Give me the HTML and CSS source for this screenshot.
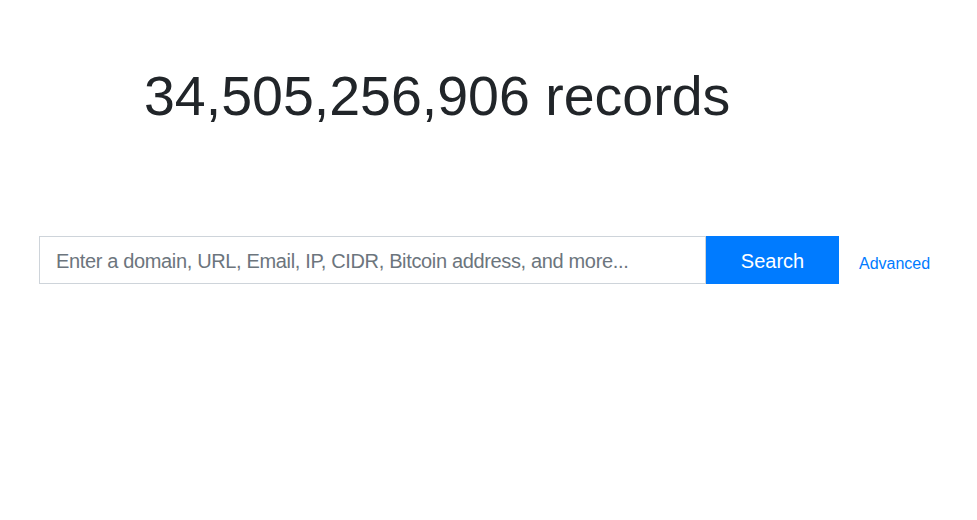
FILE: index.html
```html
<!DOCTYPE html>
<html lang="en">
<head>
    <meta charset="UTF-8">
    <meta name="viewport" content="width=device-width, initial-scale=1.0">
    <title>Search</title>
    <link rel="stylesheet" href="styles.css">
</head>
<body>
    <div class="container">
        <!-- Record count -->
        <h1 class="count">34,505,256,906 records</h1>

        <!-- Search bar -->
        <form class="search-row" onsubmit="return false">
            <input type="text" class="search-input" aria-label="Search" placeholder="Enter a domain, URL, Email, IP, CIDR, Bitcoin address, and more...">
            <button type="submit" class="search-btn">Search</button>
            <a href="#" class="advanced">Advanced</a>
        </form>
    </div>
</body>
</html>
```

FILE: styles.css
```css
body {
    margin: 0;
    font-family: "Liberation Sans", Arial, sans-serif;
    color: #212529;
    background: #fff;
}
.container {
    padding: 0 39px;
}
.count {
    margin: 0;
    padding: 63px 0 0 105px;
    font-size: 55.5px;
    font-weight: 400;
    line-height: 1.2;
}
.search-row {
    display: flex;
    align-items: center;
    margin-top: 106px;
}
.search-input {
    width: 667px;
    height: 48px;
    box-sizing: border-box;
    padding: 10px 16px 6px;
    font-family: inherit;
    font-size: 20px;
    letter-spacing: -0.35px;
    color: #495057;
    border: 1px solid #ced4da;
    border-radius: 0;
    outline: none;
}
.search-input::placeholder {
    color: #6c757d;
}
.search-btn {
    width: 133px;
    height: 48px;
    padding: 3px 0 0;
    font-family: inherit;
    font-size: 20px;
    color: #fff;
    background-color: #007bff;
    border: none;
    border-radius: 0;
    cursor: pointer;
}
.advanced {
    margin-left: 20px;
    padding-top: 8px;
    font-size: 16px;
    color: #007bff;
    text-decoration: none;
}
```
